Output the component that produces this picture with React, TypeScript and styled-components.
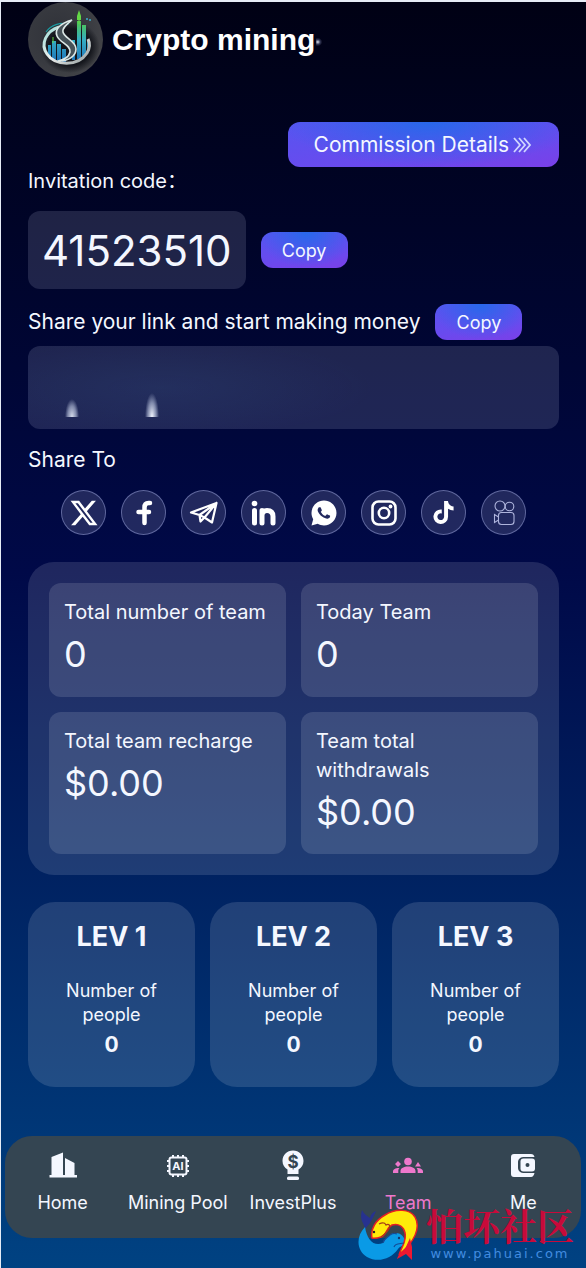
import React from "react";
import styled, { createGlobalStyle } from "styled-components";
import { FaXTwitter, FaTiktok } from "react-icons/fa6";
import { RiWhatsappFill } from "react-icons/ri";

const GlobalStyle = createGlobalStyle`
  * { box-sizing: border-box; }
  body {
    margin: 0;
    background: #e6ecf6;
    color: #f4f7ff;
    font-family: Inter, "Noto Sans CJK SC", sans-serif;
  }
  button { font: inherit; color: inherit; border: 0; cursor: pointer; }
  h1, h2, p, dl, dd { margin: 0; }
`;

const Page = styled.div`
  position: relative;
  min-height: calc(100vh - 2px);
  margin: 2px 0 0 1px;
  display: flex;
  flex-direction: column;
  background: linear-gradient(180deg, #000114 0%, #000428 18%, #000948 45%, #004282 100%);
`;

const Content = styled.main`
  padding: 0 27px;
  display: flex;
  flex-direction: column;
`;

const Header = styled.header`
  display: flex;
  align-items: center;
  gap: 9px;
`;

const Title = styled.h1`
  display: flex;
  align-items: center;
  gap: 1px;
  font: bold 30px/36px "Liberation Sans", Arial, sans-serif;
  color: #ffffff;
`;

const TitleMark = styled.span`
  width: 6px;
  height: 8px;
  margin-top: 4px;
  background: radial-gradient(ellipse at 30% 50%, #dfe4f2 0%, rgba(90, 95, 130, 0.6) 40%, rgba(60, 65, 100, 0) 75%);
`;

const GradientButton = styled.button`
  background: radial-gradient(ellipse 55% 100% at 52% 0%, #2868ea 0%, rgba(43, 104, 234, 0) 100%),
    linear-gradient(172deg, #5655f0 0%, #6a4aee 65%, #7a40e8 100%);
  border-radius: 12px;
  display: inline-flex;
  align-items: center;
  justify-content: center;
`;

const CommissionButton = styled(GradientButton)`
  align-self: flex-end;
  margin-top: 45px;
  height: 45px;
  padding: 0 26px;
  gap: 4px;
  font-size: 21px;
`;

const CopyButton = styled(GradientButton)`
  width: 87px;
  height: 36px;
  padding: 0;
  font-size: 18px;
`;

const FieldLabel = styled.p<{ $size?: number }>`
  font-size: ${(p) => p.$size ?? 21}px;
  line-height: 28px;
`;

const Row = styled.div`
  display: flex;
  align-items: center;
  gap: 15px;
`;

const CodeRow = styled(Row)`
  margin: 16px 0 15px;
`;

const Code = styled.output`
  height: 78px;
  padding: 0 14px;
  display: flex;
  align-items: center;
  border-radius: 12px;
  background: rgba(220, 230, 255, 0.14);
  font-size: 42px;
`;

const LinkBox = styled.div`
  height: 83px;
  margin: 6px 0 17px;
  padding: 12px 37px;
  display: flex;
  align-items: flex-end;
  gap: 66px;
  border-radius: 12px;
  background: radial-gradient(ellipse 40% 60% at 25% 50%, rgba(45, 70, 120, 0.3), rgba(45, 70, 120, 0)),
    rgba(220, 230, 255, 0.14);
`;

const Smudge = styled.span<{ $tall?: boolean }>`
  width: 14px;
  height: ${(p) => (p.$tall ? 24 : 18)}px;
  background: radial-gradient(ellipse 50% 100% at 50% 100%, ${(p) => (p.$tall ? "#f2f6ff" : "#d6dcec")} 0%, rgba(190, 200, 225, 0.6) 60%, rgba(120, 130, 165, 0) 100%);
`;

const ShareList = styled.nav`
  margin: 16px 0 27px;
  display: flex;
  justify-content: center;
  gap: 15px;
`;

const ShareLink = styled.a`
  width: 45px;
  height: 45px;
  display: grid;
  place-items: center;
  border: 1px solid rgba(170, 180, 235, 0.45);
  border-radius: 50%;
  background: rgba(220, 230, 255, 0.15);
  color: #ffffff;
`;

const StatPanel = styled.section`
  padding: 21px;
  display: grid;
  grid-template-columns: 1fr 1fr;
  gap: 15px;
  border-radius: 26px;
  background: rgba(240, 246, 255, 0.13);
`;

const StatCard = styled.dl`
  min-height: 114px;
  padding: 15px;
  border-radius: 12px;
  background: rgba(250, 252, 255, 0.13);
`;

const StatLabel = styled.dt`
  font-size: 20px;
  line-height: 29px;
`;

const StatValue = styled.dd`
  font-size: 36px;
  line-height: 54px;
`;

const Levels = styled.section`
  margin-top: 27px;
  display: grid;
  grid-template-columns: repeat(3, 1fr);
  gap: 15px;
`;

const LevelCard = styled.article`
  padding: 15px 24px 27px;
  border-radius: 27px;
  background: rgba(255, 255, 255, 0.13);
  text-align: center;
`;

const LevelName = styled.h2`
  margin-bottom: 22px;
  font-size: 27px;
  line-height: 40px;
  font-weight: 700;
`;

const LevelLabel = styled.p`
  font-size: 18px;
  line-height: 24px;
`;

const LevelCount = styled.p`
  margin-top: 3px;
  font-size: 21px;
  line-height: 30px;
  font-weight: 700;
`;

const TabBar = styled.nav`
  margin: 49px 5px 30px 4px;
  height: 102px;
  padding-top: 14px;
  display: grid;
  grid-template-columns: repeat(5, 1fr);
  border-radius: 27px;
  background: #344552;
`;

const Tab = styled.a<{ $active?: boolean }>`
  display: flex;
  flex-direction: column;
  align-items: center;
  gap: 11px;
  color: ${(p) => (p.$active ? "#ee78cc" : "#f4f7ff")};
  font-size: 18px;
  line-height: 24px;
  text-decoration: none;
  white-space: nowrap;
`;

const Watermark = styled.aside`
  position: absolute;
  right: 12px;
  bottom: 4px;
  display: flex;
  align-items: center;
  gap: 8px;
`;

const MarkText = styled.div`
  display: flex;
  flex-direction: column;
  align-items: center;
`;

const MarkName = styled.span`
  font: 700 37px/38px "Noto Serif CJK SC", "Noto Sans CJK SC", serif;
  color: #c80a3a;
`;

const MarkUrl = styled.span`
  font: 13px/20px "DejaVu Sans", sans-serif;
  letter-spacing: 2px;
  color: #428ce0;
`;

const Logo = () => (
  <svg width="75" height="75" viewBox="0 0 75 75" aria-hidden="true">
    <defs>
      <radialGradient id="disc" cx="38%" cy="42%" r="65%">
        <stop offset="0" stopColor="#303239" />
        <stop offset="0.65" stopColor="#383a40" />
        <stop offset="1" stopColor="#424347" />
      </radialGradient>
      <radialGradient id="shade">
        <stop offset="0.7" stopColor="#101218" stopOpacity="0.9" />
        <stop offset="1" stopColor="#101218" stopOpacity="0" />
      </radialGradient>
      <linearGradient id="bar" x1="0" y1="0" x2="0" y2="1">
        <stop offset="0" stopColor="#4fc84a" />
        <stop offset="0.45" stopColor="#35aec4" />
        <stop offset="1" stopColor="#1c6fb8" />
      </linearGradient>
      <linearGradient id="silver" x1="0" y1="0" x2="1" y2="1">
        <stop offset="0" stopColor="#9fdcd6" />
        <stop offset="0.5" stopColor="#eef0ef" />
        <stop offset="1" stopColor="#8f9999" />
      </linearGradient>
    </defs>
    <circle cx="37.5" cy="37.5" r="37.5" fill="url(#disc)" />
    <ellipse cx="42" cy="45" rx="30" ry="26" fill="url(#shade)" />
    <path d="M20 43h3v12h-3zM24 39h4v20h-4zM29 42h4v18h-4zM34 47h4v14h-4zM44 38h3v20h-3zM49 19h4v38h-4zM54 23h4v31h-4zM59 39h3v10h-3z" fill="url(#bar)" />
    <path d="M51 8l2 6v4h-4v-4z" fill="#64d847" />
    <path d="M51 14v8M25 35v6" stroke="#64d847" />
    <path d="M58 16h2v2h-2zM61 17h2v2h-2z" fill="#3a91aa" />
    <path d="M31 25C18 29 12 42 19 52c8 12 31 13 40-1 3-5 3-10 1-14" fill="none" stroke="url(#silver)" strokeWidth="3" />
    <path d="M18 30c5-7 14-10 23-8" fill="none" stroke="#1a9aa0" strokeWidth="1.2" />
    <path d="M44 18C33 21 26 27 29 34c3 7 14 9 13 16-1 5-7 8-12 9 11 0 18-5 18-12 0-8-12-11-13-17-1-4 4-8 9-12z" fill="#465258" stroke="#dce8e6" strokeWidth="1.6" />
  </svg>
);

const TripleChevron = () => (
  <svg width="20" height="16" viewBox="0 0 20 16" fill="none" stroke="#cfd6ff" strokeWidth="1.8" aria-hidden="true">
    <path d="M1 1l6 7-6 7M6 1l6 7-6 7M11 1l6 7-6 7" />
  </svg>
);

const FacebookIcon = () => (
  <svg width="26" height="28" viewBox="0 0 26 28" fill="none" stroke="currentColor" strokeWidth="4.5" strokeLinecap="round" strokeLinejoin="round" aria-hidden="true">
    <path d="M19 4h-1.500c-3 0-4 2-4 4.500V24M7.500 13H18" />
  </svg>
);

const TelegramIcon = () => (
  <svg width="30" height="26" viewBox="0 0 30 26" fill="none" stroke="currentColor" strokeWidth="2.2" strokeLinejoin="round" aria-hidden="true">
    <path d="M2 12.500L27.500 3 23 22.500l-7.500-5-4 4-1-6.500zM10.500 15L27.500 3l-12 14.500M10.500 15l5 2.500" />
  </svg>
);

const LinkedinIcon = () => (
  <svg width="28" height="28" viewBox="0 0 28 28" aria-hidden="true">
    <circle cx="4.500" cy="4.500" r="2.800" fill="currentColor" />
    <path d="M4.500 11.500V24M12 24V11.500M12 16.500c0-3 2-5 5-5 4 0 6 2 6 6V24" fill="none" stroke="currentColor" strokeWidth="5" strokeLinecap="round" />
  </svg>
);

const InstagramIcon = () => (
  <svg width="26" height="26" viewBox="0 0 26 26" fill="none" stroke="currentColor" strokeWidth="2.6" aria-hidden="true">
    <rect x="1.500" y="1.500" width="23" height="23" rx="6" />
    <circle cx="13" cy="13" r="5.200" />
    <circle cx="19.500" cy="6.500" r="1.900" fill="currentColor" stroke="none" />
  </svg>
);

const CameraIcon = () => (
  <svg width="24" height="26" viewBox="0 0 24 26" fill="none" stroke="#aeb4dc" strokeWidth="1.1" aria-hidden="true">
    <circle cx="8" cy="6" r="5" />
    <circle cx="17.500" cy="6.500" r="4.300" />
    <rect x="6.500" y="12.500" width="15.500" height="12" rx="3" />
    <path d="M6.500 17l-4-2.500v8l4-2.500" />
  </svg>
);

const HomeIcon = () => (
  <svg width="30" height="30" viewBox="0 0 30 30" fill="currentColor" aria-hidden="true">
    <path d="M1.500 25h2V7L15 2.500V25h2V8l9.500 5V25H29v2.500H1.500z" />
  </svg>
);

const ChipIcon = () => (
  <svg width="30" height="30" viewBox="0 0 30 30" fill="none" stroke="currentColor" strokeWidth="2" aria-hidden="true">
    <rect x="6.500" y="7.500" width="17" height="17" rx="2" />
    <path d="M10 5v3M15 5v3M20 5v3M10 24v3M15 24v3M20 24v3M4 11h3M4 16h3M4 21h3M23 11h3M23 16h3M23 21h3" />
    <text x="15" y="20" textAnchor="middle" fontSize="11" fontWeight="700" fill="currentColor" stroke="none">AI</text>
  </svg>
);

const BulbIcon = () => (
  <svg width="30" height="30" viewBox="0 0 30 30" fill="currentColor" aria-hidden="true">
    <path d="M15 .5C9 .5 4.500 5 4.500 11c0 4 2 6.500 5 8.500V24h11v-4.500c3-2 5-4.500 5-8.500C25.500 5 21 .5 15 .5z" />
    <rect x="9" y="26.500" width="12" height="3.500" rx="1.500" />
    <text x="15" y="17.500" textAnchor="middle" fontSize="17" fontWeight="700" fill="#344552">$</text>
  </svg>
);

const TeamIcon = () => (
  <svg width="30" height="30" viewBox="0 0 30 30" fill="currentColor" aria-hidden="true">
    <circle cx="15" cy="11.500" r="3.800" />
    <path d="M7.500 23v-2c0-3 3.500-4.500 7.500-4.500s7.500 1.500 7.500 4.500v2zM0 23v-1.500c0-2.500 3-3.700 6.500-3.500-1 1-1.200 2-1.200 3v2zM30 23v-1.500c0-2.500-3-3.700-6.500-3.500 1 1 1.200 2 1.200 3v2zM5 11l3 3-3 3-3-3zM25 12l3 4.500h-6z" />
  </svg>
);

const WalletIcon = () => (
  <svg width="30" height="30" viewBox="0 0 30 30" aria-hidden="true">
    <path d="M6 4h17c2 0 3 1 3.500 3H17c-5 0-7 2-7 5.500v5c0 3.500 2 5.500 7 5.500h9.500c-.5 2-1.500 4-3.500 4H6c-2 0-3-1-3-3V7c0-2 1-3 3-3z" fill="currentColor" />
    <rect x="12.500" y="8.500" width="14.500" height="13" rx="3" fill="currentColor" />
    <circle cx="19.500" cy="15" r="2" fill="#344552" />
  </svg>
);

const FishLogo = () => (
  <svg width="61" height="52" viewBox="0 0 61 52" aria-hidden="true">
    <path d="M8 20C7 13 2 12 5 1c2 4 5 6 8 8 1-4 3-6 6-7-2 5-4 9-6 12z" fill="#27328f" />
    <path d="M8 18C-1 27-1 41 10 48c11 6 24 2 31-8 2-3 5-3 7-5 1-5-3-11-9-11-5 0-9 3-13 10-9 4-16-3-18-16z" fill="#0a9ae6" />
    <path d="M15 29c-2-9 4-18 13-23C39-1 53 0 58 8c5 9 1 19-6 28-4 5-8 7-10 10 2-7 8-14 6-22-1-6-6-10-13-8-6 3-5 10-11 12-3 1-6 2-9 1z" fill="#ffeb09" stroke="#e51e25" strokeWidth="1.5" />
    <path d="M22 15c4-2 6-1 7 1 3-2 5 1 3 4-2 4-5 5-8 8" fill="none" stroke="#a33b18" strokeWidth="1.2" />
    <path d="M26 34c1-5 5-5 7-8 3-2 5-2 7-1M37 38c1-4 6-3 10-4" fill="none" stroke="#154b97" strokeWidth="1.2" />
    <path d="M53 29l2 9v13l-6-6-9 5c2-6 5-7 8-10z" fill="#ed1831" />
    <circle cx="17" cy="23" r="1.200" fill="#222" />
    <circle cx="42" cy="29" r="1.200" fill="#17366d" />
  </svg>
);

const shareTargets = [
  { name: "X", icon: <FaXTwitter size={30} /> },
  { name: "Facebook", icon: <FacebookIcon /> },
  { name: "Telegram", icon: <TelegramIcon /> },
  { name: "LinkedIn", icon: <LinkedinIcon /> },
  { name: "WhatsApp", icon: <RiWhatsappFill size={30} /> },
  { name: "Instagram", icon: <InstagramIcon /> },
  { name: "TikTok", icon: <FaTiktok size={23} /> },
  { name: "Video", icon: <CameraIcon /> },
];

const stats = [
  { label: "Total number of team", value: "0" },
  { label: "Today Team", value: "0" },
  { label: "Total team recharge", value: "$0.00" },
  { label: "Team total withdrawals", value: "$0.00" },
];

const tabs = [
  { label: "Home", icon: <HomeIcon /> },
  { label: "Mining Pool", icon: <ChipIcon /> },
  { label: "InvestPlus", icon: <BulbIcon /> },
  { label: "Team", icon: <TeamIcon />, active: true },
  { label: "Me", icon: <WalletIcon /> },
];

export default function App() {
  return (
    <>
      <GlobalStyle />
      <Page>
        <Content>
          <Header>
            <Logo />
            <Title>
              Crypto mining
              <TitleMark />
            </Title>
          </Header>
          <CommissionButton type="button">
            Commission Details
            <TripleChevron />
          </CommissionButton>
          <FieldLabel $size={20}>Invitation code：</FieldLabel>
          <CodeRow>
            <Code>41523510</Code>
            <CopyButton type="button">Copy</CopyButton>
          </CodeRow>
          <Row>
            <FieldLabel>Share your link and start making money</FieldLabel>
            <CopyButton type="button">Copy</CopyButton>
          </Row>
          <LinkBox>
            <Smudge />
            <Smudge $tall />
          </LinkBox>
          <FieldLabel>Share To</FieldLabel>
          <ShareList aria-label="Share To">
            {shareTargets.map((t) => (
              <ShareLink key={t.name} href="#" aria-label={t.name}>
                {t.icon}
              </ShareLink>
            ))}
          </ShareList>
          <StatPanel>
            {stats.map((s) => (
              <StatCard key={s.label}>
                <StatLabel>{s.label}</StatLabel>
                <StatValue>{s.value}</StatValue>
              </StatCard>
            ))}
          </StatPanel>
          <Levels>
            {[1, 2, 3].map((n) => (
              <LevelCard key={n}>
                <LevelName>LEV {n}</LevelName>
                <LevelLabel>Number of people</LevelLabel>
                <LevelCount>0</LevelCount>
              </LevelCard>
            ))}
          </Levels>
        </Content>
        <TabBar aria-label="Main">
          {tabs.map((t) => (
            <Tab key={t.label} href="#" $active={t.active}>
              {t.icon}
              {t.label}
            </Tab>
          ))}
        </TabBar>
        <Watermark>
          <FishLogo />
          <MarkText>
            <MarkName>怕坏社区</MarkName>
            <MarkUrl>www.pahuai.com</MarkUrl>
          </MarkText>
        </Watermark>
      </Page>
    </>
  );
}
